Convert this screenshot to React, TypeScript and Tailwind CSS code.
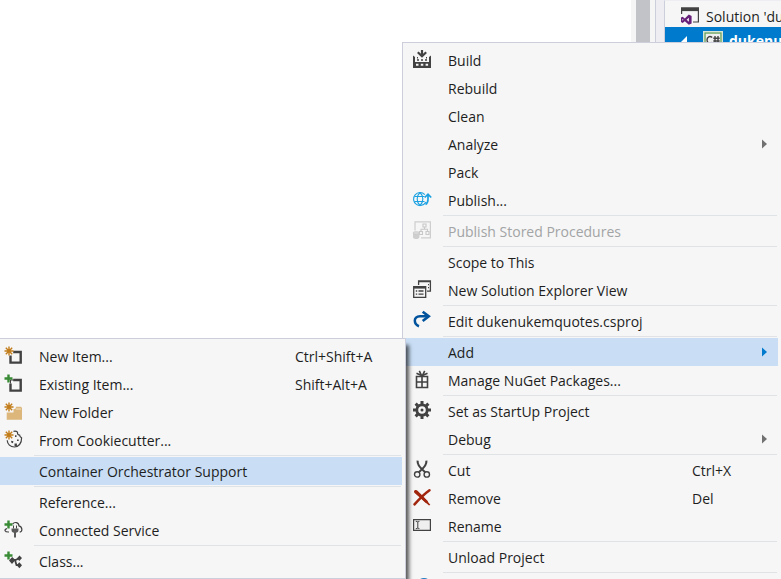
import type { ReactNode } from "react";

const INK = "#424242";
const star = "M5 0.5v9M0.5 5h9M1.8 1.8l6.4 6.4M8.2 1.8L1.8 8.2";

function Icon({ children }: { children: ReactNode }) {
  return (
    <svg width="18" height="18" viewBox="0 0 18 18" fill="none" aria-hidden="true" className="block overflow-visible">
      {children}
    </svg>
  );
}

const Star = () => <path d={star} stroke="#c27d1a" strokeWidth="1.4" />;
const Plus = () => <path d="M4.5 0.5v8M0.5 4.5h8" stroke="#388a34" strokeWidth="2.4" />;

const icons = {
  build: (
    <Icon>
      <path d="M9 0v5.5M4.8 2.3L9 6.3l4.2-4" stroke={INK} strokeWidth="2.2" />
      <path d="M0 5.5l2 1.5v5h14V7l2-1.500V18H0z" fill={INK} />
      <path d="M4 10h2M8 10h2M12 10h2M4 7.8h1M13 7.8h1" stroke={INK} strokeWidth="1.6" />
      <path d="M3 14.7h2.5M7.8 14.7h2.5M12.6 14.7h2.5" stroke="#f5f5f5" strokeWidth="2" />
    </Icon>
  ),
  publish: (
    <Icon>
      <g stroke="#1ba1e2" strokeWidth="1.1">
        <path d="M11.8 4.600A6.500 6.500 0 1 0 12.800 12" />
        <path d="M7 2.500C3.200 6 3.200 12 7 15.500C10.800 12 10.800 6 7 2.500" />
        <path d="M1.500 6.500h10M1.500 11.500h10" />
        <path d="M11.700 7.500L15 4.200l3.200 3.300M15 4.800v4.700c0 2.500-1 4-2.500 5" strokeWidth="1.700" />
      </g>
    </Icon>
  ),
  stored: (
    <Icon>
      <path d="M2 9.5V.8h15.4v16H8" stroke="#cecece" strokeWidth="1.2" />
      <path d="M10 3h3v3h-3zM6.5 10.500h3v3h-3zM13 10.500h3v3h-3zM11.5 6v2.2M8 10.500V8.2h6.5v2.300" stroke="#c8c8c8" strokeWidth="1.1" />
      <path d="M0 12v4.2c0 2.4 6.4 2.4 6.4 0V12z" fill="#cecece" />
      <ellipse cx="3.2" cy="12" rx="3.2" ry="1.4" fill="#dadada" stroke="#c4c4c4" strokeWidth=".6" />
    </Icon>
  ),
  explorer: (
    <Icon>
      <path d="M5.6 5V.8h11.8v10.4H14M5.6 1.6h11.8" stroke={INK} strokeWidth="1.3" />
      <path d="M15 4.6h1M15 7.6h1" stroke={INK} strokeWidth="1.2" />
      <path d="M.7 6.7h12v10.6H.7z" fill="#f5f5f5" stroke={INK} strokeWidth="1.3" />
      <path d="M.7 7.6h12" stroke={INK} strokeWidth="2" />
      <path d="M2.8 11h1.4M5.5 11h5M2.8 14.2h1.4M5.5 14.2h5" stroke={INK} strokeWidth="1.3" />
    </Icon>
  ),
  edit: (
    <Icon>
      <path d="M6 15.2C.8 13.5-.3 5.3 7 5.3h8" stroke="#00539c" strokeWidth="2.5" />
      <path d="M9.7.7l6 4.6-6 4.7" stroke="#00539c" strokeWidth="2.7" />
    </Icon>
  ),
  gift: (
    <Icon>
      <path d="M3.5 6.500h11v11h-11zM9 5v12M3.500 12h11" stroke={INK} strokeWidth="1.6" />
      <path d="M8.7 5.8L6.3.8M9.300 5.8L11.700.8M8.500 5.5L3.5 3.2M9.5 5.5l5-2.3" stroke={INK} strokeWidth="1.6" />
    </Icon>
  ),
  gear: (
    <Icon>
      <path d="M9 0v18M0 9h18M2.6 2.6l12.8 12.8M15.4 2.6L2.6 15.4" stroke={INK} strokeWidth="3" />
      <circle cx="9" cy="9" r="5.2" fill="#f5f5f5" stroke={INK} strokeWidth="2.8" />
      <circle cx="9" cy="9" r="1.5" fill={INK} />
    </Icon>
  ),
  cut: (
    <Icon>
      <path d="M4.6.6c-.3 3.6 1 5.6 7.6 11.6M13.4.6c.3 3.6-1 5.6-7.6 11.6" stroke={INK} strokeWidth="2.1" />
      <circle cx="4.2" cy="14.4" r="2.7" fill="#f5f5f5" stroke={INK} strokeWidth="1.4" />
      <circle cx="13.8" cy="14.4" r="2.7" fill="#f5f5f5" stroke={INK} strokeWidth="1.4" />
    </Icon>
  ),
  remove: (
    <Icon>
      <path d="M1 3.500C1.500 2 3.200 1.500 4.500 2.700L10 8.200L17.300 16.700L16 17.500L8.200 10.500z" fill="#a1260d" />
      <path d="M16.500 2.200C10.500 6.500 5.800 11.500 1.500 16.400" stroke="#a1260d" strokeWidth="2.5" strokeLinecap="round" />
      <path d="M2.500 3.800c4 3.200 7.500 6.500 11 10" stroke="#a1260d" strokeWidth="2.800" strokeLinecap="round" />
    </Icon>
  ),
  rename: (
    <Icon>
      <path d="M.6 3.6h16.8v10.8H.6z" fill="#efefef" stroke={INK} strokeWidth="1.2" />
      <path d="M2.8 5.4h1.4l.6.7.6-.7h1M2.8 12.6h1.4l.6-.7.6.7h1M4.8 6v6" stroke={INK} strokeWidth="1" />
    </Icon>
  ),
  unloadNext: (
    <Icon>
      <circle cx="11" cy="7.5" r="7.5" fill="#1e7bbf" />
    </Icon>
  ),
  newItem: (
    <Icon>
      <path d="M9.2 6h7.5v10.6H6.5V9.6" stroke={INK} strokeWidth="2.4" />
      <Star />
    </Icon>
  ),
  existingItem: (
    <Icon>
      <path d="M9.2 6h7.5v10.6H6.5V9.6" stroke={INK} strokeWidth="2.4" />
      <path d="M6.5 9.5V6h3" stroke={INK} strokeWidth="1" />
      <Plus />
    </Icon>
  ),
  folder: (
    <Icon>
      <path d="M2.7 10.5h6.8V7h1.7l1-2.3H17l1 1.3v11.7H2.7z" fill="#dcb67a" />
      <path d="M12 7h5" stroke="#f5e6c9" strokeWidth=".9" />
      <Star />
    </Icon>
  ),
  cookie: (
    <Icon>
      <path d="M9.5 1.4c1.800-.5 3.200 0 4 .8-.2 1.900.6 2.800 2.100 2.800.1 1.600.8 2.200 2 2.800.2 5.600-3.200 9.200-7.200 9.200-4 0-7-2.800-7.200-6.800" stroke={INK} strokeWidth="1.2" />
      <path d="M11 5.200h1.500v1.700H11zM7.200 10.800l2.200.5-.5 2-1.700-.8zM13 9.500h1.700v1.500h-1.700zM10.500 13.500h2.400v2.500h-2.400z" fill={INK} />
      <Star />
    </Icon>
  ),
  connected: (
    <Icon>
      <path d="M8.6 4.2c2-2.900 6.2-1.800 6.300 1.600 3.700.8 3.900 5.800.8 6.400M3 8.600C-.2 9.400.4 12.200 5 12" stroke={INK} strokeWidth="1.2" />
      <path d="M9.5 5.500v3M12.500 5.500v3" stroke={INK} strokeWidth="1" />
      <path d="M7.500 8.600h7v1.400c0 1.700-1.200 2.600-2.500 2.800v4.700h-2v-4.700c-1.300-.2-2.500-1.100-2.500-2.800z" fill="#5a5a5a" />
      <Plus />
    </Icon>
  ),
  classes: (
    <Icon>
      <path d="M7 9h4.500l4-2M11 9l1.500 5.200h4" stroke={INK} strokeWidth="1.8" />
      <path d="M5 9.500l3.200-3.600 3.200 3.200-3.400 4zM13 7.200l2.500-2.700 2.500 2.600-2.700 2.900zM12.700 14.200l2.600-2.900 2.700 2.900-2.600 3.100z" fill={INK} />
      <Plus />
    </Icon>
  ),
};

type Item = {
  label?: string;
  icon?: ReactNode;
  keys?: string;
  arrow?: boolean;
  active?: boolean;
  disabled?: boolean;
};
type Entry = Item | "sep";

const mainMenu: Entry[] = [
  { label: "Build", icon: icons.build },
  { label: "Rebuild" },
  { label: "Clean" },
  { label: "Analyze", arrow: true },
  { label: "Pack" },
  { label: "Publish...", icon: icons.publish },
  "sep",
  { label: "Publish Stored Procedures", icon: icons.stored, disabled: true },
  "sep",
  { label: "Scope to This" },
  { label: "New Solution Explorer View", icon: icons.explorer },
  "sep",
  { label: "Edit dukenukemquotes.csproj", icon: icons.edit },
  "sep",
  { label: "Add", arrow: true, active: true },
  { label: "Manage NuGet Packages...", icon: icons.gift },
  "sep",
  { label: "Set as StartUp Project", icon: icons.gear },
  { label: "Debug", arrow: true },
  "sep",
  { label: "Cut", icon: icons.cut, keys: "Ctrl+X" },
  { label: "Remove", icon: icons.remove, keys: "Del" },
  { label: "Rename", icon: icons.rename },
  "sep",
  { label: "Unload Project" },
  "sep",
  { icon: icons.unloadNext },
];

const addMenu: Entry[] = [
  { label: "New Item...", icon: icons.newItem, keys: "Ctrl+Shift+A" },
  { label: "Existing Item...", icon: icons.existingItem, keys: "Shift+Alt+A" },
  { label: "New Folder", icon: icons.folder },
  { label: "From Cookiecutter...", icon: icons.cookie },
  "sep",
  { label: "Container Orchestrator Support", active: true },
  "sep",
  { label: "Reference..." },
  { label: "Connected Service", icon: icons.connected },
  "sep",
  { label: "Class...", icon: icons.classes },
];

function MenuRow({ item, keysClass }: { item: Item; keysClass: string }) {
  return (
    <button
      type="button"
      role="menuitem"
      disabled={item.disabled}
      className={`flex h-7 w-full items-center pl-2 text-left whitespace-nowrap ${
        item.active ? "bg-[#c9def5]" : ""
      } ${item.disabled ? "text-[#a2a4a5]" : "text-[#1e1e1e]"}`}
    >
      <span className="w-[35px] shrink-0 pb-0.5">{item.icon}</span>
      <span className="flex-1 pt-0.5">{item.label}</span>
      {item.keys && <span className={`pt-0.5 ${keysClass}`}>{item.keys}</span>}
      {item.arrow && (
        <svg
          width="5"
          height="10"
          viewBox="0 0 5 10"
          aria-hidden="true"
          className={`mr-[11px] ${item.active ? "fill-[#007acc]" : "fill-[#717171]"}`}
        >
          <path d="M0 0.5L5 5L0 9.5z" />
        </svg>
      )}
    </button>
  );
}

function Menu({ entries, keysClass, className }: { entries: Entry[]; keysClass: string; className: string }) {
  return (
    <ul role="menu" className={`border border-[#cccedb] bg-[#f6f6f6] py-[3px] pr-[3px] pl-0.5 ${className}`}>
      {entries.map((entry, i) =>
        entry === "sep" ? (
          <li key={i} role="separator" className="mr-px ml-[38px] py-px">
            <div className="h-px bg-[#e0e3e6]" />
          </li>
        ) : (
          <li key={i} role="none">
            <MenuRow item={entry} keysClass={keysClass} />
          </li>
        ),
      )}
    </ul>
  );
}

function SolutionExplorer() {
  return (
    <div className="w-[117px] overflow-hidden border-t border-l border-t-[#eeeef2] border-l-[#cccedb] bg-[#f6f6f6] whitespace-nowrap">
      <div className="flex h-[26px] items-center gap-[7px] pt-1 pl-4">
        <svg width="18" height="18" viewBox="0 0 18 18" fill="none" aria-hidden="true" className="shrink-0">
          <path d="M.6 7V1h16.8v14H12" stroke={INK} strokeWidth="1.2" />
          <path d="M0 .5h18v3.6H0z" fill={INK} />
          <path
            d="M7.8 7.6L10.6 9v7.5l-2.8 1.3-4-3.6-2.2 1.7L0 15v-4.4l1.6-.8 2.2 1.7zM7.9 10.7L5.6 12.8l2.3 2zM1.4 11.7v2.1l1.1-1z"
            fill="#68217a"
            fillRule="evenodd"
          />
        </svg>
        <span className="pt-0.5">Solution 'dukenukemquotes' (1 project)</span>
      </div>
      <div className="flex h-7 items-center bg-[#007acc] pl-[13px] font-bold text-white">
        <svg width="9" height="9" viewBox="0 0 9 9" aria-hidden="true" className="mb-px shrink-0">
          <path d="M9 0v9H0z" fill="#fff" />
        </svg>
        <svg width="20" height="20" viewBox="0 0 20 20" aria-hidden="true" className="mr-1.5 ml-4 shrink-0">
          <rect x=".5" y=".5" width="19" height="18" fill="#f6f6f6" stroke="#d8e6d8" />
          <rect x="2" y="2" width="16" height="15" fill="#f0f0f0" stroke="#6ba45f" strokeWidth="1.4" />
          <path
            d="M9.2 6.6C6.8 4.4 4 6 4 9s2.8 4.2 5.2 2.4M12 5v7M15 5v7M10.3 7.2h6.4M10.3 10h6.4"
            fill="none"
            stroke={INK}
            strokeWidth="1.4"
          />
        </svg>
        <span>dukenukemquotes</span>
      </div>
    </div>
  );
}

export default function App() {
  return (
    <div className="relative h-screen overflow-hidden bg-white font-['Open_Sans','Noto_Sans',sans-serif] text-sm text-[#1e1e1e]">
      <div className="flex h-full">
        <main className="flex-1 bg-white" />
        <div className="flex w-[25px] border-r border-[#cccedb] bg-[#f5f5f5] pl-[5px]">
          <div className="w-3.5 bg-[#c2c3c9]" />
        </div>
        <div className="w-2 bg-[#eeeef2]" />
        <SolutionExplorer />
      </div>
      <Menu
        entries={mainMenu}
        keysClass="w-[86px]"
        className="absolute top-[42px] -right-px left-[402px]"
      />
      <div className="absolute top-[338px] -left-[7px] w-[413px]">
        <Menu entries={addMenu} keysClass="w-[107px]" className="shadow-[4px_6px_4px_-1px_rgba(0,0,0,0.65)]" />
      </div>
    </div>
  );
}
